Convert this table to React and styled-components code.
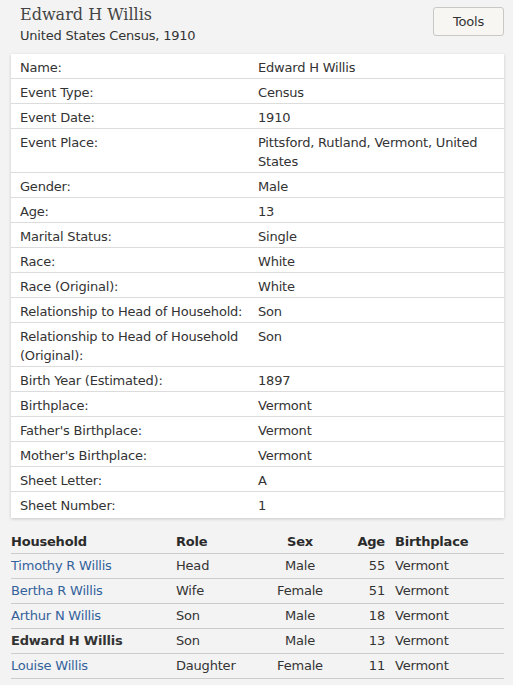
import React from 'react';
import styled, { createGlobalStyle } from 'styled-components';

const facts = [
  ['Name:', 'Edward H Willis'],
  ['Event Type:', 'Census'],
  ['Event Date:', '1910'],
  ['Event Place:', 'Pittsford, Rutland, Vermont, United States'],
  ['Gender:', 'Male'],
  ['Age:', '13'],
  ['Marital Status:', 'Single'],
  ['Race:', 'White'],
  ['Race (Original):', 'White'],
  ['Relationship to Head of Household:', 'Son'],
  ['Relationship to Head of Household (Original):', 'Son'],
  ['Birth Year (Estimated):', '1897'],
  ['Birthplace:', 'Vermont'],
  ["Father's Birthplace:", 'Vermont'],
  ["Mother's Birthplace:", 'Vermont'],
  ['Sheet Letter:', 'A'],
  ['Sheet Number:', '1'],
];

const household = [
  { name: 'Timothy R Willis', role: 'Head', sex: 'Male', age: 55, place: 'Vermont' },
  { name: 'Bertha R Willis', role: 'Wife', sex: 'Female', age: 51, place: 'Vermont' },
  { name: 'Arthur N Willis', role: 'Son', sex: 'Male', age: 18, place: 'Vermont' },
  { name: 'Edward H Willis', role: 'Son', sex: 'Male', age: 13, place: 'Vermont', self: true },
  { name: 'Louise Willis', role: 'Daughter', sex: 'Female', age: 11, place: 'Vermont' },
];

const App = () => {
  return (
    <>
      <GlobalStyle />
      <Page>
        <Header>
          <TitleBox>
            <Title>Edward H Willis</Title>
            <Subtitle>United States Census, 1910</Subtitle>
          </TitleBox>
          <ToolsButton type="button">Tools</ToolsButton>
        </Header>

        <Card>
          {facts.map(([label, value]) => (
            <FactRow key={label}>
              <FactLabel>{label}</FactLabel>
              <FactValue>{value}</FactValue>
            </FactRow>
          ))}
        </Card>

        <Household>
          <HeadRow>
            <Cell>Household</Cell>
            <Cell>Role</Cell>
            <Cell $align="center">Sex</Cell>
            <Cell $align="right">Age</Cell>
            <Cell $pad>Birthplace</Cell>
          </HeadRow>
          {household.map((p) => (
            <MemberRow key={p.name}>
              <Cell>{p.self ? <Self>{p.name}</Self> : <PersonLink href="#">{p.name}</PersonLink>}</Cell>
              <Cell>{p.role}</Cell>
              <Cell $align="center">{p.sex}</Cell>
              <Cell $align="right">{p.age}</Cell>
              <Cell $pad>{p.place}</Cell>
            </MemberRow>
          ))}
        </Household>
      </Page>
    </>
  );
};

export default App;

const GlobalStyle = createGlobalStyle`
  html, body {
    margin: 0;
    padding: 0;
    background: #f3f3f3;
  }
  body {
    font-family: 'DejaVu Sans', Verdana, sans-serif;
    font-size: 13px;
    letter-spacing: -0.2px;
    color: #333;
  }
`;

const Page = styled.div`
  width: 513px;
  padding: 0 9px 0 11px;
  box-sizing: border-box;
`;

const Header = styled.div`
  display: flex;
  justify-content: space-between;
  align-items: flex-start;
  padding: 4px 0 0 9px;
  height: 50px;
  box-sizing: border-box;
`;

const TitleBox = styled.div`
  display: flex;
  flex-direction: column;
`;

const Title = styled.h1`
  margin: 0;
  font-family: 'DejaVu Serif', 'Liberation Serif', serif;
  font-size: 16px;
  font-weight: normal;
  letter-spacing: 0;
  line-height: 22px;
  color: #444;
`;

const Subtitle = styled.div`
  font-size: 13px;
  line-height: 20px;
  color: #333;
`;

const ToolsButton = styled.button`
  margin-top: 3px;
  width: 71px;
  height: 29px;
  border: 1px solid #c8c8c4;
  border-radius: 3px;
  background: #f7f6f3;
  font-family: 'DejaVu Sans', Verdana, sans-serif;
  font-size: 13px;
  letter-spacing: -0.2px;
  color: #333;
  padding: 0;
`;

const Card = styled.div`
  margin-top: 4px;
  padding-bottom: 2px;
  background: #fff;
  box-shadow: 0 1px 3px rgba(0, 0, 0, 0.18);
`;

const FactRow = styled.div`
  display: grid;
  grid-template-columns: 238px 1fr;
  padding: 4px 9px 1px 9px;
  line-height: 19px;
  border-bottom: 1px solid #dcdcdc;
  &:last-child {
    border-bottom: none;
  }
`;

const FactLabel = styled.div`
  padding-right: 8px;
`;

const FactValue = styled.div``;

const Household = styled.div`
  margin-top: 13px;
`;

const MemberRow = styled.div`
  display: grid;
  grid-template-columns: 165px 95px 58px 56px 1fr;
  height: 25px;
  line-height: 24px;
  box-sizing: border-box;
  border-bottom: 1px solid #cccccc;
`;

const HeadRow = styled(MemberRow)`
  height: 23px;
  line-height: 22px;
  font-weight: bold;
  color: #2b2b2b;
`;

const Cell = styled.div`
  text-align: ${(p) => p.$align || 'left'};
  padding-left: ${(p) => (p.$pad ? '10px' : '0')};
  white-space: nowrap;
`;

const PersonLink = styled.a`
  color: #33629b;
  text-decoration: none;
`;

const Self = styled.span`
  font-weight: bold;
`;
